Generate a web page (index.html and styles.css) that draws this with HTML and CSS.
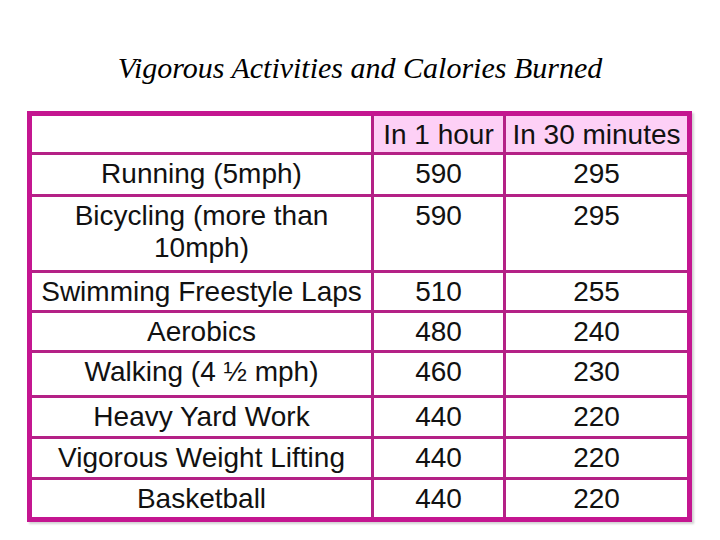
FILE: index.html
```html
<!DOCTYPE html>
<html lang="en">
<head>
<meta charset="utf-8">
<title>Vigorous Activities and Calories Burned</title>
<link rel="stylesheet" href="styles.css">
</head>
<body>
<div class="slide">
  <h1 class="title">Vigorous Activities and Calories Burned</h1>
  <table class="cal">
    <colgroup>
      <col class="c1"><col class="c2"><col class="c3">
    </colgroup>
    <tr class="r-head">
      <td class="blank"></td>
      <th>In 1 hour</th>
      <th>In 30 minutes</th>
    </tr>
    <tr class="r-run"><td>Running (5mph)</td><td>590</td><td>295</td></tr>
    <tr class="r-bike"><td>Bicycling (more than 10mph)</td><td>590</td><td>295</td></tr>
    <tr class="r-swim"><td>Swimming Freestyle Laps</td><td>510</td><td>255</td></tr>
    <tr class="r-aero"><td>Aerobics</td><td>480</td><td>240</td></tr>
    <tr class="r-walk"><td>Walking (4 ½ mph)</td><td>460</td><td>230</td></tr>
    <tr class="r-yard"><td>Heavy Yard Work</td><td>440</td><td>220</td></tr>
    <tr class="r-lift"><td>Vigorous Weight Lifting</td><td>440</td><td>220</td></tr>
    <tr class="r-ball"><td>Basketball</td><td>440</td><td>220</td></tr>
  </table>
</div>
</body>
</html>
```

FILE: styles.css
```css
html, body {
  margin: 0;
  padding: 0;
  background: #ffffff;
}

.slide {
  width: 720px;
  height: 540px;
  overflow: hidden;
  padding-top: 50px;
  box-sizing: border-box;
}

.title {
  margin: 0;
  font-family: "Liberation Serif", "Times New Roman", serif;
  font-style: italic;
  font-weight: normal;
  font-size: 30px;
  line-height: 36px;
  text-align: center;
  color: #000;
}

.cal {
  margin: 25px 0 0 27px;
  width: 665px;
  border-collapse: separate;
  border-spacing: 0;
  border: 5px solid #c41690;
  table-layout: fixed;
  font-family: "Liberation Sans", Arial, sans-serif;
  font-size: 28px;
  line-height: 32px;
  color: #111;
  box-shadow: 2px 2px 2px rgba(0, 0, 0, 0.18);
}

.c1 { width: 339px; }
.c2 { width: 132px; }
.c3 { width: 184px; }

.cal td,
.cal th {
  padding: 3px 0 0 0;
  text-align: center;
  vertical-align: top;
  font-weight: normal;
  border-left: 3px solid #b42186;
  border-top: 3px solid #b42186;
  box-sizing: border-box;
}

.cal td:first-child,
.cal th:first-child {
  border-left: none;
}

.cal tr:first-child td,
.cal tr:first-child th {
  border-top: none;
}

.cal th {
  background: #fdd0f6;
}

.cal .blank {
  background: #ffffff;
}

.r-head > * { height: 36px; }
.r-run > * { height: 42px; padding-top: 8px; }
.r-bike > * { height: 76px; }
.r-swim > * { height: 40px; padding-top: 2px; }
.r-aero > * { height: 40px; }
.r-walk > * { height: 45px; }
.r-yard > * { height: 41px; }
.r-lift > * { height: 41px; }
.r-ball > * { height: 40px; padding-top: 2px; }
```
